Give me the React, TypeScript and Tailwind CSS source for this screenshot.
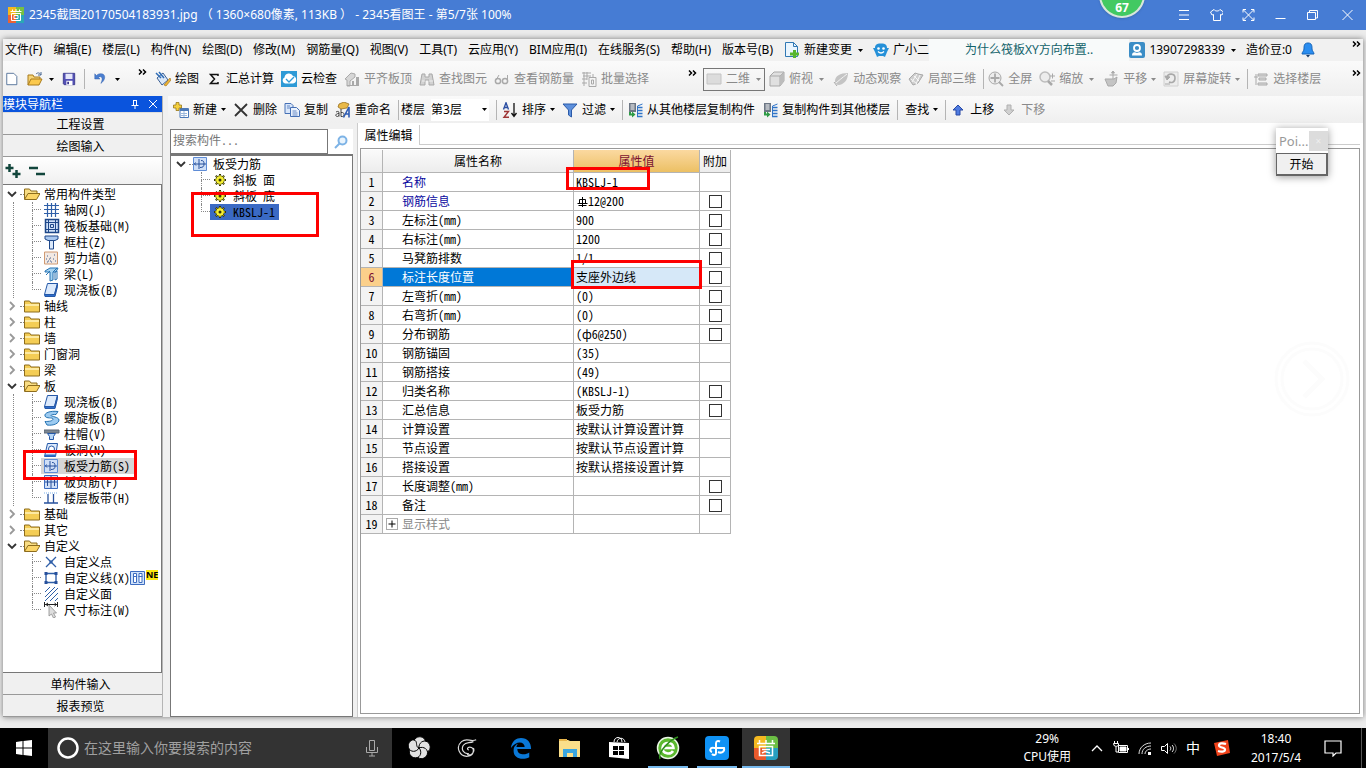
import React, { useState } from 'react';

type IconName = string;

interface TreeChild {
  label: string;
  icon: IconName;
  selected?: boolean;
  badge?: boolean;
}

interface TreeGroup {
  label: string;
  rail?: boolean;
  children?: TreeChild[];
}

interface PropertyRow {
  name: string;
  value: string;
  extra: boolean;
  tone?: 'link' | 'muted';
  steel?: boolean;
}

const MENUS = [
  '文件(F)', '编辑(E)', '楼层(L)', '构件(N)', '绘图(D)', '修改(M)', '钢筋量(Q)', '视图(V)',
  '工具(T)', '云应用(Y)', 'BIM应用(I)', '在线服务(S)', '帮助(H)', '版本号(B)',
];

const NAV_TREE: TreeGroup[] = [
  {
    label: '常用构件类型',
    rail: true,
    children: [
      { label: '轴网(J)', icon: 'grid' },
      { label: '筏板基础(M)', icon: 'raft' },
      { label: '框柱(Z)', icon: 'column' },
      { label: '剪力墙(Q)', icon: 'wall' },
      { label: '梁(L)', icon: 'beam' },
      { label: '现浇板(B)', icon: 'slab' },
    ],
  },
  { label: '轴线' },
  { label: '柱' },
  { label: '墙' },
  { label: '门窗洞' },
  { label: '梁' },
  {
    label: '板',
    rail: true,
    children: [
      { label: '现浇板(B)', icon: 'slab' },
      { label: '螺旋板(B)', icon: 'spiral' },
      { label: '柱帽(V)', icon: 'cap' },
      { label: '板洞(N)', icon: 'hole' },
      { label: '板受力筋(S)', icon: 'rebar', selected: true },
      { label: '板负筋(F)', icon: 'negative' },
      { label: '楼层板带(H)', icon: 'strip' },
    ],
  },
  { label: '基础' },
  { label: '其它' },
  {
    label: '自定义',
    children: [
      { label: '自定义点', icon: 'point' },
      { label: '自定义线(X)', icon: 'line', badge: true },
      { label: '自定义面', icon: 'face' },
      { label: '尺寸标注(W)', icon: 'dimension' },
    ],
  },
];

const PROPERTIES: PropertyRow[] = [
  { name: '名称', value: 'KBSLJ-1', extra: false, tone: 'link' },
  { name: '钢筋信息', value: '12@200', extra: true, tone: 'link', steel: true },
  { name: '左标注(mm)', value: '900', extra: true },
  { name: '右标注(mm)', value: '1200', extra: true },
  { name: '马凳筋排数', value: '1/1', extra: true },
  { name: '标注长度位置', value: '支座外边线', extra: true },
  { name: '左弯折(mm)', value: '(0)', extra: true },
  { name: '右弯折(mm)', value: '(0)', extra: true },
  { name: '分布钢筋', value: '(ф6@250)', extra: true },
  { name: '钢筋锚固', value: '(35)', extra: false },
  { name: '钢筋搭接', value: '(49)', extra: false },
  { name: '归类名称', value: '(KBSLJ-1)', extra: true },
  { name: '汇总信息', value: '板受力筋', extra: true },
  { name: '计算设置', value: '按默认计算设置计算', extra: false },
  { name: '节点设置', value: '按默认节点设置计算', extra: false },
  { name: '搭接设置', value: '按默认搭接设置计算', extra: false },
  { name: '长度调整(mm)', value: '', extra: true },
  { name: '备注', value: '', extra: true },
  { name: '显示样式', value: '', extra: false, tone: 'muted' },
];

const G = '#a9a9a9';

const ICONS: Record<IconName, React.ReactNode> = {
  // 标准工具栏
  file: (
    <path d="M2 1.500h8l3.500 3.500v9.500H2z" fill="#fff" stroke="#4a6a94" />
  ),
  open: (
    <>
      <path d="M1 14V4h5l1 2h6v3" fill="#f6d477" stroke="#a87b1c" />
      <path d="M1 14l3-6h11l-3 6z" fill="#fbc94e" stroke="#a87b1c" />
      <path d="M9 3c2-2 4-1 5 1m0-3v3h-3" fill="none" stroke="#4d6b95" />
    </>
  ),
  save: (
    <>
      <path d="M1.500 1.500h13v13h-12l-1-1z" fill="#5350b5" stroke="#39378c" />
      <path d="M4 2h8v6H4z" fill="#e4e6fa" />
      <path d="M5 10h7v5H5z" fill="#fff" />
      <path d="M6 11h2v3H6z" fill="#39378c" />
    </>
  ),
  undo: (
    <path d="M2 2v6h6L6 6c4-2 6 1 3 7 6-4 6-12-1-11-1.500 0-2.800.8-4 2z" fill="#4b7fd0" stroke="#2c59a8" strokeWidth=".5" />
  ),
  draw: (
    <>
      <path d="M2 7l6-5 5 7-6 5z" fill="#dbe8f8" stroke="#3b5f93" />
      <path d="M1 2l5 5M4 1l5 6" stroke="#2f6db7" strokeWidth="1.500" />
      <path d="M9 14l6-7 1 2-5 6z" fill="#f0b533" stroke="#9a6b13" strokeWidth=".6" />
    </>
  ),
  sum: <path d="M12 5V3.500H4.500l4 4.500-4 4.500H12V11" fill="none" stroke="#111" strokeWidth="1.500" />,
  cloud: (
    <>
      <path d="M0 0h16v16H0z" fill="#2e9ad6" />
      <path d="M4 12.500a3.200 3.200 0 0 1-.5-6 4.500 4.500 0 0 1 8.500-1.500 3.800 3.800 0 0 1 0 7.500z" fill="#fff" />
      <path d="M5 8l3 3 5-5" fill="none" stroke="#2e9ad6" strokeWidth="1.300" />
    </>
  ),
  aligntop: (
    <>
      <path d="M1 8l6-6 4 1v3L6 10v5H3V9z" fill="#d6d6d6" stroke={G} />
      <path d="M8 10h2v5H8zm4-4h3v9h-3z" fill={G} />
      <path d="M3 14.500h12" stroke={G} />
    </>
  ),
  binoculars: (
    <>
      <path d="M3 3h3v3h4V3h3l2 11h-5V9H6v5H1z" fill="#d2d2d2" stroke={G} />
      <path d="M3 10h3M10 10h4" stroke="#eee" />
    </>
  ),
  glasses: (
    <>
      <circle cx="4" cy="10" r="2.600" fill="none" stroke={G} strokeWidth="1.500" />
      <circle cx="11" cy="10" r="2.600" fill="none" stroke={G} strokeWidth="1.500" />
      <path d="M2 9l3-5m8.500 6V4" stroke={G} fill="none" />
    </>
  ),
  batch: (
    <>
      <path d="M1 2h9M2 5h8M1 8h5M3 1v14M6 1v8M1 12h5" stroke={G} />
      <path d="M8 6.500h7v9H8zM10.500 9v4h2V9zM12 3v3" fill="none" stroke={G} />
    </>
  ),
  plane: <path d="M1 3h14v10H1z" fill="#dcdcdc" stroke="#c4c4c4" />,
  cube: (
    <>
      <path d="M1 5l4-4h10v9l-4 5H1z" fill="#e0e0e0" stroke={G} />
      <path d="M1 5h10v10M11 5l4-4" fill="none" stroke={G} />
      <path d="M11 5l4-4v9l-4 5z" fill="#bcbcbc" />
    </>
  ),
  orbit: (
    <>
      <path d="M2 10c0-5 5-8 13-8 0 6-3 11-9 12-3 0-4-2-4-4z" fill="#c4c4c4" />
      <path d="M1 14C5 10 9 7 14 3" stroke="#f4f4f4" fill="none" />
      <path d="M1 11l3 4" stroke={G} />
    </>
  ),
  local3d: (
    <>
      <path d="M1 8l6-6 3 1 5 1-5 8-5 2z" fill="#cecece" stroke={G} />
      <path d="M3 8l6 5M6 5l5 5M9 3L4 11M12 4L8 13" stroke="#f7f7f7" />
    </>
  ),
  fullscreen: (
    <>
      <circle cx="7" cy="7" r="6" fill="#ececec" stroke={G} />
      <path d="M7 2.500v9M2.500 7h9M11 11l4 4" stroke={G} strokeWidth="1.800" />
    </>
  ),
  zoom: (
    <>
      <circle cx="6" cy="6" r="5" fill="#ececec" stroke="#bdbdbd" strokeWidth="1.500" />
      <path d="M9 10l4 4" stroke={G} strokeWidth="2.500" />
      <path d="M11 5h5m-2.500-2.500v5M12 10h4" stroke={G} />
    </>
  ),
  pan: (
    <>
      <path d="M2 8h9l3-2-1 6-3 3H5z" fill="#c4c4c4" stroke={G} />
      <path d="M10 1v7M6.500 4h8M10 0L8.500 2h3z" stroke={G} fill={G} />
    </>
  ),
  rotate: (
    <>
      <path d="M1 1h14v14H1z" fill="#ededed" stroke="#d0d0d0" />
      <path d="M4 6c1-4 8-4 8 1s-4 5-6 4" fill="none" stroke={G} strokeWidth="1.600" />
      <path d="M2 5l5 1-3 3zM2 13h5" fill={G} stroke={G} />
    </>
  ),
  floors: (
    <>
      <path d="M5 3h9v2H5zM6 7h7v2H6zM5 12h9v2H5z" fill="#ddd" stroke={G} />
      <path d="M1 6h4M3 3v11" stroke={G} />
    </>
  ),
  // 构件工具栏
  create: (
    <>
      <path d="M7 6.500h8.500v9H7z" fill="#fff" stroke="#4b79b8" />
      <path d="M7 7h8v2H7z" fill="#4b79b8" />
      <path d="M8 11.500h6M8 13.500h6M11 9v6" stroke="#9ab7dc" />
      <path d="M3 .5h3v2.500h2.500v3H6v2.500H3V6H.5V3H3z" fill="#f4d03f" stroke="#8c6c0c" strokeWidth=".7" />
    </>
  ),
  remove: <path d="M2 2l12 12M14 2L2 14" stroke="#333" strokeWidth="1.800" />,
  copy: (
    <>
      <path d="M1 1.500h6l2 2v8H1z" fill="#d8e6fa" stroke="#4670b5" />
      <path d="M6.500 5.500h6l3 3v6h-9z" fill="#eaf2fd" stroke="#4670b5" />
      <path d="M3 4h3M3 6h3M8.500 9h4M8.500 11h5M8.500 13h5" stroke="#4670b5" strokeWidth=".8" />
    </>
  ),
  rename: (
    <>
      <path d="M4 2l5-2 5 2-2 4-6 1-3-2z" fill="#e9b949" stroke="#8c6412" strokeWidth=".7" />
      <path d="M1 10c2-1 3-1 3 1v3.500M4 11.500c-4 0-4 3-1.500 3L4 13.500M6 7v7.500h1.500c2 0 2-4 0-4H6" fill="none" stroke="#333" strokeWidth=".9" />
      <path d="M8.500 15.500L14 5v10.500M10.500 12H14" fill="none" stroke="#2d5bb3" strokeWidth="1.600" />
    </>
  ),
  sort: (
    <>
      <path d="M1.500 7.500L4 .8l2.500 6.700M2.500 5.500h3" fill="none" stroke="#2b4ea2" strokeWidth="1.400" />
      <path d="M2 9.500h4.500l-4.500 5.700h5" fill="none" stroke="#9e3535" strokeWidth="1.400" />
      <path d="M12 1v13M9.500 11l2.500 3.500 2.500-3.500" stroke="#111" fill="none" strokeWidth="1.300" />
    </>
  ),
  filter: <path d="M1 2h14l-5.500 6v7l-3-2V8z" fill="#5d90dc" stroke="#2b5aa8" />,
  transfer: (
    <>
      <path d="M2 1h7v9H2z" fill="#6c7684" />
      <path d="M3.500 3h4M3.500 5h4M3.500 7h4" stroke="#fff" />
      <path d="M10 5.500h5.500M10 8.500h5.500M10 11.500h5.500M10 14.500h5.500" stroke="#2f74c8" strokeWidth="1.600" />
      <path d="M10.500 15V4l5-2" stroke="#2f74c8" fill="none" />
      <path d="M2 10v3.500h3v2l3.500-3-3.500-3v2H4V10z" fill="#2e9b45" />
    </>
  ),
  up: <path d="M8 3l5 5h-3v5H6V8H3z" fill="#4f7be0" stroke="#2949a5" />,
  down: <path d="M8 13l5-5h-3V3H6v5H3z" fill="#d0d0d0" stroke="#b0b0b0" />,
  // 构件树
  folder: (
    <>
      <path d="M.5 14V3h5l1.500 2h8.500v9z" fill="#f4cd55" stroke="#8d6c1d" />
      <path d="M1 6h14v2H1z" fill="#fdeaa2" />
    </>
  ),
  folderOpen: (
    <>
      <path d="M.5 13V3h5l1.500 2h6v3" fill="#f8dd84" stroke="#8d6c1d" />
      <path d="M.5 13.500L4 7.500h12L12.500 13.500z" fill="#fbd567" stroke="#8d6c1d" />
    </>
  ),
  grid: (
    <path d="M3.500 1v14M7.500 1v14M11.500 1v14M0 3.500h15M0 7.500h15M0 11.500h15" stroke="#2f5fa8" strokeWidth="1.200" />
  ),
  raft: (
    <>
      <path d="M1.500 1.500h13v13h-13z" fill="#cfe0f7" stroke="#1e4789" strokeWidth="1.500" />
      <path d="M4.500 1v14M11.500 1v14M1 4.500h14M1 11.500h14M6.500 6.500h3v3h-3z" fill="none" stroke="#1e4789" />
    </>
  ),
  column: (
    <>
      <path d="M1 2h13v3l-3 1.500H4L1 5z" fill="#a9c8f0" stroke="#1e4789" />
      <path d="M5.500 6.500h4V15h-4z" fill="#dbe9fb" stroke="#1e4789" />
    </>
  ),
  wall: (
    <>
      <path d="M.5 2h13v12H.5z" fill="#f2e9e3" stroke="#d09a72" />
      <path d="M3 6h1M6 8h1M10 5h1M9 9h1M4 11h1M7 12h1M11 11h1M2 9h1M5 9h1M6 11h1M3 12h1" stroke="#46608f" />
    </>
  ),
  beam: (
    <>
      <path d="M1 5l5-3h8l-2 4H9v8l-3 1V6H1z" fill="#a6d4f2" stroke="#2673b2" />
      <path d="M11 6l2-1v8l-2 1zM2 9l4-4M9 6l4-4" fill="none" stroke="#2673b2" />
    </>
  ),
  slab: (
    <>
      <path d="M3.500 1.500h10l-3 11H.5z" fill="#dceafc" stroke="#2558a8" />
      <path d="M.5 12.500h10l3-11v3l-2.500 10H1z" fill="#2e6ecb" stroke="#2558a8" />
    </>
  ),
  spiral: (
    <path d="M14 1.500C6 .5 0 3 1 6s8 1 8 3-4 2.500-8 2.500l2 3.500c7 1 12-2 12-5S7 6.500 7 5.500s3-1 5-1z" fill="#9ccbf1" stroke="#2673b2" />
  ),
  cap: (
    <>
      <path d="M0 4h15v3H0z" fill="#7d8894" stroke="#5c6976" />
      <path d="M3.500 7.500h8l-2 3v3h-4v-3z" fill="#b7d7f7" stroke="#2558a8" />
    </>
  ),
  hole: (
    <>
      <path d="M3.500 1.500h10l-2 13H.5z" fill="#dceafc" stroke="#2558a8" />
      <circle cx="7.500" cy="7" r="3" fill="#fff" stroke="#2558a8" />
      <path d="M1 13.500h10.500" stroke="#2e6ecb" strokeWidth="2" />
    </>
  ),
  rebar: (
    <>
      <path d="M.5 1.500h13v13H.5z" fill="#cfdff7" stroke="#5e8cd6" />
      <path d="M1 8h12M6 3v10M2.500 6.500L1.500 8l1.500 1.500M8 4.500c2.500 0 3 1 3 3.500s-1 3.500-4 3.500" fill="none" stroke="#27509c" />
    </>
  ),
  negative: (
    <>
      <path d="M.5 1.500h13v13H.5z" fill="#cfdff7" stroke="#3d6cc0" />
      <path d="M3.500 4v8M10.500 4v8M1 8h12M7 2v12" stroke="#27509c" />
    </>
  ),
  strip: (
    <>
      <path d="M0 3h14" stroke="#7ab0ea" strokeDasharray="1 1" />
      <path d="M0 13h14M4 4v9M9.500 4v9" stroke="#27509c" strokeWidth="1.300" />
    </>
  ),
  point: (
    <>
      <path d="M2 3l10 10M12 3L2 13" stroke="#2f5fa8" strokeWidth="1.300" />
      <path d="M5.500 6.500h3v3h-3z" fill="#2f5fa8" />
    </>
  ),
  line: (
    <>
      <path d="M2 3.500h10v9H2z" fill="none" stroke="#2f5fa8" strokeWidth="1.400" />
      <path d="M.5 2h3v3h-3zM10.500 2h3v3h-3zM.5 11h3v3h-3zM10.500 11h3v3h-3z" fill="#27509c" />
    </>
  ),
  face: (
    <path d="M1 6l5-5M1 11L11 1M1 15L14 2M6 15l8-8M11 15l3-3" stroke="#2f5fa8" />
  ),
  dimension: (
    <>
      <path d="M.5 0v5M13.500 0v5M1 2.500h12.500M4 1L2 2.500 4 4M10.500 1l2 1.500-2 1.500" stroke="#222" fill="none" />
      <path d="M5 3v11l2.500-2 2 4 2-1-2-4h3z" fill="#dedede" stroke="#8d8d8d" strokeWidth=".8" />
    </>
  ),
  gear: (
    <>
      <path d="M7 2v12M1 8h12M2.800 3.800l8.400 8.400M11.200 3.800l-8.400 8.400" stroke="#34340a" strokeWidth="2" />
      <circle cx="7" cy="8" r="4.200" fill="#f6f032" stroke="#34340a" strokeWidth=".7" />
      <path d="M7 3v10M2 8h10M3.500 4.500l7 7M10.500 4.500l-7 7" stroke="#f6f032" />
      <circle cx="7" cy="8" r="1.500" fill="#34340a" />
    </>
  ),
  // 菜单栏
  change: (
    <>
      <path d="M1.500 .5h8l4 4v10h-12z" fill="#eaf5fe" stroke="#3178b4" />
      <path d="M9.500 .5v4h4" fill="none" stroke="#3178b4" />
      <path d="M9 8h3v2.500h3v3h-3V16H9v-2.500H6v-3h3z" fill="#57b52e" />
    </>
  ),
  robot: (
    <>
      <path d="M8 1.500c5 0 6 2 6 4.500h2l-2 4c-.5 2-1.500 3-2 5l-2-1H6l-2 1c-.5-2-1.500-3-2-5L0 6h2c0-2.500 1-4.500 6-4.500z" fill="#2590d8" />
      <circle cx="5.500" cy="6.500" r="1.300" fill="#fff" />
      <circle cx="10.500" cy="6.500" r="1.300" fill="#fff" />
      <path d="M5 9.500c2 2 4 2 6 0" stroke="#fff" fill="none" strokeWidth="1.200" />
    </>
  ),
  user: (
    <>
      <rect width="16" height="16" rx="2" fill="#3b8dc6" />
      <circle cx="8" cy="6" r="3" fill="none" stroke="#fff" strokeWidth="1.800" />
      <path d="M3 13.500c0-4 3-3.500 5-2.500 2-1 5-1.500 5 2.500z" fill="#fff" />
    </>
  ),
  bell: (
    <>
      <path d="M8 1c4 0 4 3 4 6 0 2 2 3 2 5H2c0-2 2-3 2-5 0-3 0-6 4-6z" fill="#2a8df0" stroke="#1463b8" />
      <path d="M6 13h4l-2 2.500z" fill="#173a66" />
    </>
  ),
};

const Icon = ({ name, className = 'size-4' }: { name: IconName; className?: string }) => (
  <svg viewBox="0 0 16 16" className={`shrink-0 ${className}`} aria-hidden="true">
    {ICONS[name]}
  </svg>
);

const Caret = ({ className = 'w-[5px]' }: { className?: string }) => (
  <span className={`flex shrink-0 justify-center ${className}`}>
    <svg viewBox="0 0 5 3" className="h-[3px] w-[5px]" fill="currentColor" aria-hidden="true">
      <path d="M0 0h5L2.500 3z" />
    </svg>
  </span>
);

const Divider = () => <span className="h-5 w-px shrink-0 bg-[#b4b4b4]" />;

const More = () => (
  <svg viewBox="0 0 9 6" className="h-1.5 w-[9px] shrink-0" fill="none" stroke="#000" strokeWidth="1.500" aria-hidden="true">
    <path d="M1 .5L3.500 3 1 5.500M5 .5L7.500 3 5 5.500" />
  </svg>
);

interface ToolProps {
  icon?: IconName;
  label: string;
  caret?: string;
  disabled?: boolean;
}

const Tool = ({ icon, label, caret, disabled }: ToolProps) => (
  <button
    disabled={disabled}
    className={`flex shrink-0 items-center gap-1 whitespace-nowrap ${disabled ? 'text-[#8a8a8a]' : 'text-black'}`}
  >
    {icon && <Icon name={icon} />}
    {label}
    {caret && <Caret className={caret} />}
  </button>
);

const Chevron = ({ open }: { open: boolean }) => (
  <svg
    viewBox="0 0 10 10"
    className={`size-[10px] shrink-0 ${open ? 'text-[#333]' : 'text-[#999]'}`}
    fill="none"
    stroke="currentColor"
    strokeWidth="1.800"
    aria-hidden="true"
  >
    <path d={open ? 'M1 3l4 4 4-4' : 'M3 1l4 4-4 4'} />
  </svg>
);

const Branch = ({ last }: { last: boolean }) => (
  <span className="flex h-4 w-[9px] shrink-0 flex-col">
    <span className="h-2 border-b border-l border-dotted border-[#888]" />
    {!last && <span className="h-2 border-l border-dotted border-[#888]" />}
  </span>
);

// 红色标注框
const Mark = ({ className }: { className: string }) => (
  <span className={`pointer-events-none absolute z-10 border-3 border-[#fe0000] ${className}`} />
);

const NavPanel = () => (
  <aside className="flex w-40 shrink-0 flex-col border-r border-[#b5b5b5] bg-[#f0f0f0] font-['Noto_Sans_CJK_SC',sans-serif] [font-feature-settings:'hwid']">
    <div className="flex h-[17px] items-center border-b border-[#ddd] bg-[#0a54dd] pr-1 text-white">
      <span>模块导航栏</span>
      <button aria-label="固定" className="ml-auto">
        <svg viewBox="0 0 10 10" className="size-[10px]" fill="none" stroke="#fff">
          <path d="M3.500 1v5M6.500 1v5M3 1.500h4M1.500 6.500h7M5 6.500V10" />
        </svg>
      </button>
      <button aria-label="关闭" className="ml-2">
        <svg viewBox="0 0 10 10" className="size-[10px]" fill="none" stroke="#fff">
          <path d="M1 1l8 8M9 1L1 9" />
        </svg>
      </button>
    </div>
    <button className="h-[22px] border-b border-[#999] pr-1">工程设置</button>
    <button className="h-[22px] border-b border-[#999] pr-1">绘图输入</button>
    <div className="flex h-[27px] items-center gap-2 bg-linear-to-b from-white to-[#f0f0f0] px-0.5">
      <button aria-label="全部展开">
        <svg viewBox="0 0 16 16" className="size-4" stroke="#12463c" strokeWidth="2.500">
          <path d="M4.500 1v8M.5 5h8M11.500 7v8M7.500 11h8" />
        </svg>
      </button>
      <button aria-label="全部折叠">
        <svg viewBox="0 0 16 16" className="size-4" stroke="#12463c" strokeWidth="2.500">
          <path d="M0 5h9M7 11h9" />
        </svg>
      </button>
    </div>
    <ul className="flex-1 overflow-hidden border-y border-r border-[#777] bg-white pt-px">
      {NAV_TREE.map((group, index) => (
        <li key={index}>
          <div className="flex h-4 items-center pl-1">
            <Chevron open={!!group.children} />
            <span className="ml-[3px] w-1 border-t border-dotted border-[#888]" />
            <Icon name={group.children ? 'folderOpen' : 'folder'} />
            <span className="pl-1">{group.label}</span>
          </div>
          {group.children && (
            <ul className={`ml-[10px] border-l border-dotted ${group.rail ? 'border-[#888]' : 'border-transparent'}`}>
              {group.children.map((child, i) => (
                <li key={child.label} className="relative flex h-4 items-center pl-[18px]">
                  <Branch last={i === group.children!.length - 1} />
                  <span className={`flex h-4 items-center gap-1 whitespace-nowrap pl-[3px] ${child.selected ? 'bg-[#d6d6d6] pr-1.5' : ''}`}>
                    <Icon name={child.icon} />
                    {child.label}
                  </span>
                  {child.badge && (
                    <>
                      <svg viewBox="0 0 16 16" className="size-4 shrink-0" aria-hidden="true">
                        <path d="M.5 1.500h14v13H.5z" fill="#cfe2fa" stroke="#3d6cc0" />
                        <path d="M3.500 3.500h3v9h-3zM9 3.500h3v9H9zM3 6.500h4M8.500 6.500h4" fill="#fff" stroke="#3d6cc0" />
                      </svg>
                      <span className="self-start bg-[#fde910] font-['Noto_Sans',sans-serif] text-[9px] leading-[10px] font-bold">NE</span>
                    </>
                  )}
                  {child.selected && <Mark className="-top-2 left-[9px] h-[30px] w-[114px]" />}
                </li>
              ))}
            </ul>
          )}
        </li>
      ))}
    </ul>
    <button className="h-[22px] border-b border-[#999] pr-1">单构件输入</button>
    <button className="h-[22px] border-b border-[#999] pr-1">报表预览</button>
  </aside>
);

const MEMBERS = ['斜板 面', '斜板 底', 'KBSLJ-1'];

const MemberPanel = () => (
  <section className="flex w-[185px] shrink-0 flex-col pt-1.5 pl-0.5 font-['Noto_Sans_CJK_SC',sans-serif] [font-feature-settings:'hwid']">
    <div className="flex h-[25px] bg-white">
      <input
        aria-label="搜索构件"
        placeholder="搜索构件..."
        className="w-[158px] border border-[#777] px-0.5 pb-1 placeholder:text-[#777]"
      />
      <button aria-label="搜索" className="flex flex-1 items-center justify-center">
        <svg viewBox="0 0 14 14" className="size-3.5" fill="none" stroke="#7db3e6" strokeWidth="2">
          <circle cx="8.500" cy="5.500" r="4" fill="#e9f4fd" />
          <path d="M5.500 8.500L1 13" />
        </svg>
      </button>
    </div>
    <div className="flex-1 border border-t-2 border-[#777] bg-white">
      <div className="flex h-4 items-center pl-[5px]">
        <Chevron open />
        <span className="ml-[3px] w-1 border-t border-dotted border-[#888]" />
        <Icon name="rebar" />
        <span className="pl-1">板受力筋</span>
      </div>
      <ul>
        {MEMBERS.map((member, i) => {
          const selected = i === MEMBERS.length - 1;
          return (
            <li key={member} className="relative flex h-4 items-center pl-[30px]">
              <Branch last={selected} />
              <span className={`flex h-4 items-center gap-1 pl-[3px] whitespace-pre ${selected ? 'bg-[#3a6ac4] pr-1' : ''}`}>
                <Icon name="gear" />
                {member}
              </span>
              {selected && <Mark className="-top-3 left-5 h-[45px] w-32" />}
            </li>
          );
        })}
      </ul>
    </div>
  </section>
);

// 三级钢符号
const SteelMark = () => (
  <svg viewBox="0 0 12 12" className="inline-block size-3 align-[-2px]" fill="none" stroke="#000" role="img" aria-label="三级钢">
    <path d="M6.500 1v10M3.500 3.500h6v4h-6zM1.500 7.500h10M2.500 9.500h8" />
  </svg>
);

const PropertyTable = () => {
  const [checked, setChecked] = useState<number[]>([]);

  const toggle = (row: number) => {
    setChecked((rows) => (rows.includes(row) ? rows.filter((r) => r !== row) : [...rows, row]));
  };

  return (
    <table className="w-[370px] table-fixed border-separate border-spacing-0 leading-[18px]">
      <colgroup>
        <col className="w-[22px]" />
        <col className="w-[191px]" />
        <col className="w-[126px]" />
        <col className="w-[31px]" />
      </colgroup>
      <thead>
        <tr className="h-[23px] bg-linear-to-b from-[#fafafa] to-[#ececec]">
          <th className="border-r border-b border-[#b4b4b4]" />
          <th className="border-r border-b border-[#b4b4b4] font-normal">属性名称</th>
          <th className="border-r border-b border-[#b4b4b4] bg-linear-to-b from-[#fbd9a0] to-[#ecc063] font-normal text-[#7a1030]">属性值</th>
          <th className="border-r border-b border-[#b4b4b4] font-normal whitespace-nowrap">附加</th>
        </tr>
      </thead>
      <tbody>
        {PROPERTIES.map((row, index) => {
          const active = index === 5;
          return (
            <tr key={row.name} className="h-[19px]">
              <td className={`border-r border-b border-[#b4b4b4] text-center ${active ? 'bg-[#fbd08b] text-[#7a1030]' : 'bg-[#f3f3f3]'}`}>
                {index + 1}
              </td>
              <td
                className={`relative border-r border-b border-[#b4b4b4] pl-[19px] ${
                  active ? 'bg-[#0078d7] text-white' : row.tone === 'link' ? 'text-[#0a0aa0]' : row.tone === 'muted' ? 'text-[#888]' : ''
                }`}
              >
                {row.tone === 'muted' && (
                  <button
                    aria-label="展开"
                    className="absolute top-[3px] left-[3px] flex size-3 items-center justify-center border border-[#aaa] bg-white text-black"
                  >
                    <svg viewBox="0 0 8 8" className="size-2" stroke="currentColor">
                      <path d="M.5 4h7M4 .5v7" />
                    </svg>
                  </button>
                )}
                {row.name}
              </td>
              <td className={`relative border-r border-b border-[#b4b4b4] pl-0.5 whitespace-nowrap ${active ? 'bg-[#d6e8f8]' : ''}`}>
                {row.steel && <SteelMark />}
                {row.value}
                {index === 0 && <Mark className="-top-1.5 -left-2 h-[23px] w-[84px]" />}
                {active && <Mark className="-top-2 -left-[3px] h-[29px] w-[131px]" />}
              </td>
              <td className="border-r border-b border-[#b4b4b4]">
                {row.extra && (
                  <input
                    type="checkbox"
                    aria-label={`附加 ${row.name}`}
                    checked={checked.includes(index)}
                    onChange={() => toggle(index)}
                    className="mx-auto block size-[13px] appearance-none border border-[#333] bg-white checked:bg-[#333]"
                  />
                )}
              </td>
            </tr>
          );
        })}
      </tbody>
    </table>
  );
};

const MenuBar = () => (
  <nav className="flex h-[22px] items-center bg-[#f1f1f1] pr-0.5 pl-0.5">
    <div className="flex gap-[11px] whitespace-nowrap">
      {MENUS.map((menu) => (
        <button key={menu}>{menu}</button>
      ))}
      <div className="flex gap-2">
        <Tool icon="change" label="新建变更" caret="w-[9px]" />
        <Tool icon="robot" label="广小二" />
      </div>
    </div>
    <div className="flex h-full flex-1 items-center bg-[#f8fafa] pl-9">
      <a href="#" className="text-[#12636b]">为什么筏板XY方向布置..</a>
    </div>
    <div className="flex items-center gap-2 pr-9">
      <Tool icon="user" label="13907298339" caret="w-[9px]" />
      <span>造价豆:0</span>
      <button aria-label="通知"><Icon name="bell" className="block size-4" /></button>
    </div>
    <span className="pb-3"><More /></span>
  </nav>
);

const Toolbar = () => (
  <div className="flex h-[35px] items-center border-t border-[#fafafa] bg-linear-to-b from-[#fafafa] to-[#efefef] pr-0.5 pl-0.5">
    <div className="flex w-[150px] shrink-0 items-center gap-2">
      <button aria-label="新建文件"><Icon name="file" className="block size-3.5" /></button>
      <button aria-label="打开" className="flex items-center gap-1.5"><Icon name="open" /><Caret /></button>
      <button aria-label="保存"><Icon name="save" className="block size-3.5" /></button>
      <Divider />
      <button aria-label="撤销" className="flex items-center gap-2"><Icon name="undo" className="size-3.5" /><Caret /></button>
      <span className="ml-auto self-start pr-2"><More /></span>
    </div>
    <div className="flex shrink-0 items-center gap-[7px]">
      <Tool icon="draw" label="绘图" />
      <Tool icon="sum" label="汇总计算" />
      <Tool icon="cloud" label="云检查" />
      <Tool icon="aligntop" label="平齐板顶" disabled />
      <Tool icon="binoculars" label="查找图元" disabled />
      <Tool icon="glasses" label="查看钢筋量" disabled />
      <Tool icon="batch" label="批量选择" disabled />
    </div>
    <span className="ml-[39px] pb-3"><More /></span>
    <button className="mr-1 ml-1.5 flex h-[23px] w-[62px] shrink-0 items-center gap-1 border border-[#777] pl-0.5 whitespace-nowrap text-[#8a8a8a]">
      <Icon name="plane" />
      二维
      <Caret className="w-[9px]" />
    </button>
    <div className="flex shrink-0 items-center gap-[7px]">
      <Tool icon="cube" label="俯视" caret="w-[9px]" disabled />
      <Tool icon="orbit" label="动态观察" disabled />
      <Tool icon="local3d" label="局部三维" disabled />
      <div className="flex items-center gap-1">
        <Divider />
        <Tool icon="fullscreen" label="全屏" disabled />
      </div>
      <Tool icon="zoom" label="缩放" caret="w-[9px]" disabled />
      <Tool icon="pan" label="平移" caret="w-[5px]" disabled />
      <Tool icon="rotate" label="屏幕旋转" caret="w-[5px]" disabled />
      <div className="flex items-center gap-[5px]">
        <Divider />
        <Tool icon="floors" label="选择楼层" disabled />
      </div>
    </div>
    <span className="ml-auto pb-3"><More /></span>
  </div>
);

const MemberToolbar = () => (
  <div className="flex h-[27px] items-center gap-[7px] bg-linear-to-b from-[#fafafa] to-[#efefef] pl-[5px]">
    <Tool icon="create" label="新建" caret="w-[5px]" />
    <Tool icon="remove" label="删除" />
    <Tool icon="copy" label="复制" />
    <Tool icon="rename" label="重命名" />
    <div className="flex items-center gap-0.5">
      <Divider />
      <label htmlFor="floor">楼层</label>
      <div className="relative ml-1 flex items-center">
        <select id="floor" className="h-[22px] w-[58px] appearance-none bg-white">
          <option>第3层</option>
        </select>
        <span className="pointer-events-none absolute right-0.5"><Caret /></span>
      </div>
    </div>
    <div className="flex items-center gap-[5px]">
      <Divider />
      <Tool icon="sort" label="排序" caret="w-[5px]" />
    </div>
    <Tool icon="filter" label="过滤" caret="w-[5px]" />
    <div className="flex items-center gap-1">
      <Divider />
      <Tool icon="transfer" label="从其他楼层复制构件" />
    </div>
    <Tool icon="transfer" label="复制构件到其他楼层" />
    <Divider />
    <Tool label="查找" caret="w-[5px]" />
    <div className="flex items-center gap-1">
      <Divider />
      <Tool icon="up" label="上移" />
    </div>
    <Tool icon="down" label="下移" disabled />
  </div>
);

// 悬浮的小窗口
const FloatingWindow = () => (
  <div className="absolute top-[5px] right-[35px] w-[52px] bg-white shadow-[0_1px_8px_rgba(0,0,0,0.4)]">
    <div className="flex h-[25px] items-center justify-between pl-[3px] font-['Noto_Sans',sans-serif] text-[13px] text-[#999] [font-feature-settings:normal]">
      Poi...
      <button aria-label="关闭" className="flex size-5 items-center justify-center bg-[#dcdcdc] text-[10px] text-[#eee]">×</button>
    </div>
    <button className="h-[23px] w-full border-t border-r-2 border-b-2 border-l border-[#666] bg-[#f0f0f0] font-['Noto_Sans_CJK_SC',sans-serif]">开始</button>
  </div>
);

const TitleBar = () => (
  <header className="relative flex h-[30px] shrink-0 items-center bg-[#467cd4] pl-2 text-white">
    <svg viewBox="0 0 16 16" className="size-4" aria-hidden="true">
      <path d="M0 0h8v8H0z" fill="#f3b81f" />
      <path d="M8 0h8v8H8z" fill="#77c043" />
      <path d="M0 8h8v8H0z" fill="#ec6335" />
      <path d="M8 8h8v8H8z" fill="#2aa8b5" />
      <path d="M2.500 4.500h11M8 2v3M4.500 2.500v2M11.500 2.500v2M3.500 6.500h9v7h-9zM6 8.500h4v3H6z" fill="none" stroke="#fff" />
    </svg>
    <h1 className="pl-[5px]">2345截图20170504183931.jpg （ 1360×680像素, 113KB ） - 2345看图王 - 第5/7张 100%</h1>
    <div className="absolute -top-7 right-[221px] flex size-[46px] items-end justify-center rounded-full border-2 border-[#d8e6dc] bg-[#42c962] pb-0.5 text-xs leading-3 font-bold shadow">
      67
    </div>
    <div className="ml-auto flex">
      {[
        ['菜单', 'M1 3.500h10M1 8h10M1 12.500h10'],
        ['皮肤', 'M4 2.500L.5 5l1.500 3 1.500-.5v6h7v-6l1.500.5 1.500-3L10 2.500c-1 2-5 2-6 0z'],
        ['全屏', 'M1 5.500V2.500h3M9 2.500h3v3M12 10.500v3H9M4 13.500H1v-3M1.500 3l10 10M11.500 3l-10 10'],
        ['最小化', 'M1.500 11.500h10'],
        ['还原', 'M1.500 5.500h8v7h-8zM3.500 5V3.500h8V11H10'],
      ].map(([label, d]) => (
        <button key={label} aria-label={label} className="flex w-8 justify-center">
          <svg viewBox="0 0 13 16" className="h-4 w-[13px]" fill="none" stroke="#fff"><path d={d} /></svg>
        </button>
      ))}
      <button aria-label="关闭" className="flex w-[38px] justify-center">
        <svg viewBox="0 0 13 16" className="h-4 w-[13px]" fill="none" stroke="#fff"><path d="M1.500 3l10 10M11.500 3l-10 10" /></svg>
      </button>
    </div>
  </header>
);

const TASKS: { label: string; state?: 'open' | 'active'; art: React.ReactNode }[] = [
  {
    label: '资源管理器',
    art: (
      <>
        <path d="M1 4h9l2 1h10v16H1z" fill="#fbdf8a" />
        <path d="M1 3h8v2H1z" fill="#e8b64c" />
        <path d="M5 21v-8h14v8h-4v-4H9v4z" fill="#3aa6e0" />
      </>
    ),
  },
  {
    label: '应用商店',
    art: (
      <>
        <path d="M7 6c0-6 8-6 8 0M10 6c1-5 7-5 8 0" fill="none" stroke="#fff" />
        <path d="M2 6l20 1v16L2 21z" fill="#fff" />
        <path d="M6 10h5v4H6zM12 10h5v4h-5zM6 15h5v4H6zM12 15h5v4h-5z" fill="#000" />
      </>
    ),
  },
  {
    label: '浏览器',
    state: 'open',
    art: (
      <>
        <circle cx="12" cy="12" r="10.500" fill="#5cb92f" stroke="#eaf6e5" strokeWidth="1.500" />
        <path d="M8 12h9.500c0-6.500-10.500-7-11 0 0 6 8 7 10.500 3" fill="none" stroke="#fff" strokeWidth="2.600" />
        <path d="M4 23C1 16 15 3 22 1" fill="none" stroke="#2f8f1d" strokeWidth="1.500" />
      </>
    ),
  },
  {
    label: '同步工具',
    state: 'open',
    art: (
      <>
        <rect width="24" height="24" rx="4" fill="#0f92f5" />
        <path d="M15 5.500c-2-1-4-.5-4 2V17c0 2.500-2.500 2.500-4 1M9 12h10c1 4-3 5.500-6 4M9 12c-4-1-5 3-2 4" fill="none" stroke="#fff" strokeWidth="2" />
      </>
    ),
  },
  {
    label: '看图王',
    state: 'active',
    art: (
      <>
        <path d="M0 4a4 4 0 0 1 4-4h8v12H0z" fill="#f5b921" />
        <path d="M12 0h8a4 4 0 0 1 4 4v8H12z" fill="#6cbf45" />
        <path d="M0 12h12v12H4a4 4 0 0 1-4-4z" fill="#ea5a2c" />
        <path d="M12 12h12v8a4 4 0 0 1-4 4h-8z" fill="#279fc0" />
        <path d="M3 7.500h18M5.500 4v3M12 4v3M18.500 4v3M5.500 10.500h13v9h-13zM8 13.500h8M8 17l3-1.500 5 1.500" fill="none" stroke="#fff" strokeWidth="1.500" />
      </>
    ),
  },
];

const TaskBar = () => (
  <footer className="flex h-10 shrink-0 items-stretch bg-black text-white">
    <button aria-label="开始菜单" className="flex w-12 items-center justify-center">
      <svg viewBox="0 0 16 16" className="size-4" fill="#fff">
        <path d="M0 2l6.500-1v6.500H0zM7.500 1L16 0v7.500H7.500zM0 8.500h6.500V15L0 14zM7.500 8.500H16V16l-8.500-1z" />
      </svg>
    </button>
    <div className="flex w-[344px] items-center bg-[#333] pr-3 pl-2">
      <svg viewBox="0 0 24 24" className="size-6" fill="none" stroke="#fff" strokeWidth="2.500"><circle cx="12" cy="12" r="9.500" /></svg>
      <input
        aria-label="搜索"
        placeholder="在这里输入你要搜索的内容"
        className="min-w-0 flex-1 bg-transparent pl-1 text-sm placeholder:text-[#a0a0a0]"
      />
      <svg viewBox="0 0 16 18" className="h-[18px] w-4" fill="none" stroke="#aaa">
        <path d="M5.500 1.500h5v10h-5zM2.500 8v5.500h11V8M8 14v3M5 17h6" />
      </svg>
    </div>
    <div className="flex pl-[3px]">
      <button aria-label="风扇" className="flex w-12 items-center justify-center">
        <svg viewBox="0 0 24 24" className="size-6" fill="#e2e2e2" stroke="#000" strokeWidth=".9">
          {[0, 72, 144, 216, 288].map((angle) => (
            <path key={angle} d="M12 12C7 11 5 5 9 2c4-3 10 0 9 4-1 3-6 2-6 6z" transform={`rotate(${angle} 12 12)`} />
          ))}
        </svg>
      </button>
      <button aria-label="漩涡" className="flex w-12 items-center justify-center">
        <svg viewBox="0 0 24 24" className="size-[22px]" fill="none" stroke="#ddd" strokeWidth="1.300">
          <path d="M22 3c-6 3-10-3-16 2-7 6-2 17 7 16 7-1 8-10 2-10-3 0-3 3-1 3M19 5c-5 2-8 0-11 4-3 5 1 10 6 9M19 12c2 5-3 9-7 7" />
        </svg>
      </button>
    </div>
    <div className="flex gap-px pl-1.5">
      <button aria-label="Edge" className="flex w-12 items-center justify-center">
        <svg viewBox="0 0 24 24" className="size-[22px]">
          <path d="M1 12C2 4 7 1 12 1c7 0 11 5 11 12H8c0 7 9 7 13 4v5C13 26 3 23 4 14c0-4 3-6 5-7-1 1-2 3-2 4h9c0-7-10-7-15 1z" fill="#0a78d7" />
        </svg>
      </button>
      {TASKS.map((task) => (
        <button
          key={task.label}
          aria-label={task.label}
          className={`relative flex w-12 items-center justify-center ${task.state === 'active' ? 'bg-[#333]' : ''}`}
        >
          <svg viewBox="0 0 24 24" className="size-6">{task.art}</svg>
          {task.state && (
            <span className={`absolute bottom-0 h-0.5 bg-[#76b9ed] ${task.state === 'active' ? 'inset-x-0' : 'inset-x-1'}`} />
          )}
        </button>
      ))}
    </div>
    <div className="ml-auto flex items-center">
      <div className="pr-[18px] text-center leading-[18px]">
        <p>29%</p>
        <p>CPU使用</p>
      </div>
      <div className="flex items-center gap-2">
        <svg viewBox="0 0 16 16" className="size-4" fill="none" stroke="#fff" strokeWidth="1.300"><path d="M3 11l5-5 5 5" /></svg>
        <svg viewBox="0 0 16 16" className="size-4" fill="none" stroke="#fff">
          <path d="M5.500 5.500h9v7h-9zM15.500 8v2" />
          <path d="M7 7h6v4H7z" fill="#fff" />
          <path d="M1.500 1v2M4.500 1v2M.5 3.500h5v2l-2.500 1-2-1zM3 7v5h2" />
        </svg>
        <svg viewBox="0 0 16 16" className="size-4" fill="none" stroke="#ddd">
          <path d="M2 14C2 8 7 3 14 3M5 14c0-5 4-8 9-8M8 14c0-3 3-5 6-5" />
          <path d="M11 12h3v3h-3z" fill="#fff" stroke="none" />
        </svg>
        <svg viewBox="0 0 16 16" className="size-4" fill="none" stroke="#fff">
          <path d="M.5 6.500h3l3-3v10l-3-3h-3zM9 6.500c1 1 1 3 0 4M11 5c2 2 2 5 0 7" />
          <path d="M13 3.500c3 3 3 7 0 10" stroke="#777" />
        </svg>
      </div>
      <span className="w-8 text-center text-sm">中</span>
      <svg viewBox="0 0 16 16" className="mx-[5px] size-4" aria-hidden="true">
        <path d="M0 3l14-3 2 13-13 3z" fill="#f0431b" />
        <path d="M12 4c-3-1-7-1-7 1.500s6 1.500 6 4-4 2.500-7 1.500" fill="none" stroke="#fff" strokeWidth="2.200" />
      </svg>
      <div className="w-[82px] text-center leading-[19px]">
        <p>18:40</p>
        <p>2017/5/4</p>
      </div>
      <button aria-label="通知中心" className="flex w-8 justify-center">
        <svg viewBox="0 0 18 18" className="size-[18px]" fill="none" stroke="#fff" strokeWidth="1.200">
          <path d="M1 2h16v12h-5l-3 3v-3H1z" />
        </svg>
      </button>
      <span className="mr-1 ml-3 h-10 w-px bg-[#555]" />
    </div>
  </footer>
);

export default function App() {
  return (
    <div className="flex h-screen flex-col overflow-hidden bg-[#ececec] font-['Noto_Sans','Noto_Sans_CJK_SC',sans-serif] text-xs leading-4 text-black">
      <TitleBar />
      <main className="flex min-h-0 flex-1 flex-col px-[3px] pt-[9px] pb-[11px]">
        <div className="flex min-h-0 flex-1 flex-col bg-[#f0f0f0] shadow-[0_0_6px_rgba(0,0,0,0.5)]">
          <MenuBar />
          <Toolbar />
          <div className="flex min-h-0 flex-1">
            <NavPanel />
            <div className="flex min-w-0 flex-1 flex-col pl-[5px]">
              <MemberToolbar />
              <div className="flex min-h-0 flex-1">
                <MemberPanel />
                <section className="relative ml-1 flex min-w-0 flex-1 flex-col border-l border-[#ccc] bg-white pt-0.5 pr-[3px] pb-[3px] pl-0.5 font-['Noto_Sans_CJK_SC',sans-serif] [font-feature-settings:'hwid']">
                  <div className="-ml-0.5 flex h-5">
                    <button className="w-[62px] shrink-0 border-r border-[#ccc] text-center">属性编辑</button>
                    <span className="flex-1 border-b border-[#ccc]" />
                  </div>
                  <div className="mt-[3px] flex-1 border border-[#999] pt-px">
                    <PropertyTable />
                  </div>
                  <button aria-label="下一张" className="absolute top-[218px] right-[13px]">
                    <svg viewBox="0 0 76 76" className="size-[76px]" fill="none" stroke="#fcfcfc" strokeWidth="3">
                      <circle cx="38" cy="38" r="36" />
                      <circle cx="38" cy="38" r="30" />
                      <path d="M30 20l18 18-18 18" strokeWidth="5" />
                    </svg>
                  </button>
                  <FloatingWindow />
                </section>
              </div>
            </div>
          </div>
        </div>
      </main>
      <TaskBar />
    </div>
  );
}
